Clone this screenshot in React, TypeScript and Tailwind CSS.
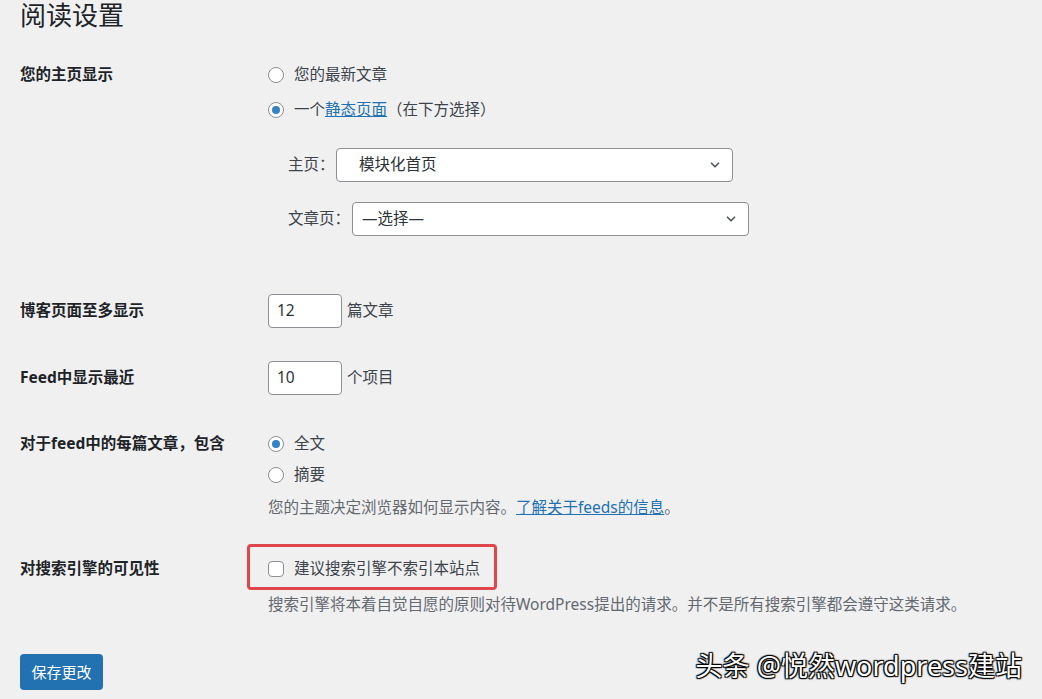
import type { ReactNode } from 'react'

const FONT = "font-['Noto_Sans','Noto_Sans_CJK_SC',sans-serif]"

function Radio({ checked }: { checked?: boolean }) {
  return (
    <span className="flex h-4 w-4 shrink-0 items-center justify-center rounded-full border border-[#8c8f94] bg-white">
      {checked && <span className="h-2 w-2 rounded-full bg-[#3582c4]" />}
    </span>
  )
}

function Chevron() {
  return (
    <svg width="14" height="14" viewBox="0 0 20 20" className="text-[#50575e]">
      <path
        d="M5 7.5l5 5 5-5"
        fill="none"
        stroke="currentColor"
        strokeWidth="2.4"
        strokeLinecap="round"
        strokeLinejoin="round"
      />
    </svg>
  )
}

function Row({
  label,
  className,
  labelClass,
  children,
}: {
  label: string
  className?: string
  labelClass?: string
  children: ReactNode
}) {
  return (
    <div className={`flex ${className ?? ''}`}>
      <div
        className={`flex w-[248px] shrink-0 items-center font-bold text-[#1d2327] ${labelClass ?? 'h-6'}`}
      >
        {label}
      </div>
      <div className="flex flex-col">{children}</div>
    </div>
  )
}

export default function App() {
  return (
    <div
      className={`${FONT} relative h-[699px] w-[1042px] overflow-hidden bg-[#f0f0f1] px-5 text-[15.5px] text-[#3c434a]`}
    >
      <h1 className="h-[30px] pt-[1px] text-[26px] leading-[29px] font-normal text-[#1d2327]">
        阅读设置
      </h1>

      <Row label="您的主页显示" className="mt-[33px]">
        <label className="flex h-6 items-center gap-[10px]">
          <Radio />
          您的最新文章
        </label>
        <label className="mt-[11px] flex h-6 items-center gap-[10px]">
          <Radio checked />
          <span>
            一个<span className="text-[#2271b1] underline">静态页面</span>（在下方选择）
          </span>
        </label>
        <div className="mt-[26px] flex h-[34px] items-center pl-5">
          <span className="w-12">主页：</span>
          <div className="flex h-[34px] w-[397px] items-center justify-between rounded border border-[#8c8f94] bg-white pr-[10px] pl-[22px] text-[#2c3338]">
            模块化首页
            <Chevron />
          </div>
        </div>
        <div className="mt-5 flex h-[34px] items-center pl-5">
          <span className="w-16">文章页：</span>
          <div className="flex h-[34px] w-[397px] items-center justify-between rounded border border-[#8c8f94] bg-white pr-[10px] pl-[9px] text-[#2c3338]">
            —选择—
            <Chevron />
          </div>
        </div>
      </Row>

      <Row label="博客页面至多显示" className="mt-[58px]" labelClass="h-[34px]">
        <div className="flex h-[34px] items-center gap-[5px]">
          <div className="flex h-[34px] w-[74px] items-center rounded border border-[#8c8f94] bg-white pl-2 text-[#2c3338]">
            12
          </div>
          篇文章
        </div>
      </Row>

      <Row label="Feed中显示最近" className="mt-[33px]" labelClass="h-[34px]">
        <div className="flex h-[34px] items-center gap-[5px]">
          <div className="flex h-[34px] w-[74px] items-center rounded border border-[#8c8f94] bg-white pl-2 text-[#2c3338]">
            10
          </div>
          个项目
        </div>
      </Row>

      <Row label="对于feed中的每篇文章，包含" className="mt-[37px]">
        <label className="flex h-6 items-center gap-[10px]">
          <Radio checked />
          全文
        </label>
        <label className="mt-[7px] flex h-6 items-center gap-[10px]">
          <Radio />
          摘要
        </label>
        <p className="mt-[9px] flex h-6 items-center text-[#646970]">
          您的主题决定浏览器如何显示内容。
          <span className="text-[#2271b1] underline">了解关于feeds的信息</span>。
        </p>
      </Row>

      <Row label="对搜索引擎的可见性" className="mt-[37px]">
        <div className="relative">
          <label className="flex h-6 items-center gap-[10px]">
            <span className="h-4 w-4 rounded border border-[#8c8f94] bg-white" />
            建议搜索引擎不索引本站点
          </label>
          <div className="absolute top-[-13px] left-[-21px] h-[46px] w-[250px] rounded-sm border-[3px] border-[#e0474c]" />
        </div>
        <p className="mt-3 flex h-6 items-center text-[#646970]">
          搜索引擎将本着自觉自愿的原则对待WordPress提出的请求。并不是所有搜索引擎都会遵守这类请求。
        </p>
      </Row>

      <button className="mt-[37px] h-9 w-[83px] rounded bg-[#2271b1] text-[15px] text-white">
        保存更改
      </button>

      <div className="absolute right-5 bottom-[16px] text-[27px] leading-[34px] text-white [text-shadow:0_0_2px_#000,1px_1px_1px_#000,-1px_-1px_1px_#000,1px_-1px_1px_#000,-1px_1px_1px_#000]">
        头条 @悦然wordpress建站
      </div>
    </div>
  )
}
